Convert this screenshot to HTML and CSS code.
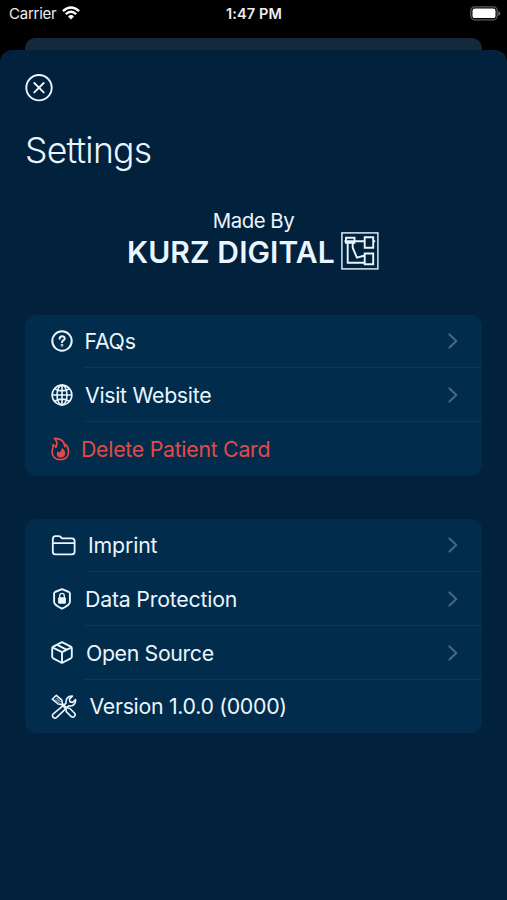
FILE: index.html
```html
<!DOCTYPE html>
<html lang="en">
<head>
<meta charset="utf-8">
<title>Settings</title>
<link rel="stylesheet" href="styles.css">
</head>
<body>
<header class="status">
  <div class="carrier"><span class="t-carrier">Carrier</span>
    <svg width="18" height="14" viewBox="0 0 18 14" fill="none" stroke="#fff" stroke-width="2.4"><path d="M.9 5.2Q9-2.4 17.1 5.2M3.8 8.2Q9 3.4 14.2 8.2"/><path d="M6 10.4Q9 7.8 12 10.4L9 13.4Z" fill="#fff" stroke="none"/></svg>
  </div>
  <div class="clock">1:47 PM</div>
  <svg class="battery" width="31" height="15" viewBox="0 0 31 15"><rect x=".8" y=".8" width="26.4" height="13" rx="4" fill="none" stroke="#5c5c5c" stroke-width="1.3"/><rect x="2.5" y="2.5" width="23" height="9.6" rx="2.2" fill="#fff"/><path d="M28.4 5v5q2-1 2-2.5T28.4 5Z" fill="#666"/></svg>
</header>
<div class="behind"></div>
<main class="sheet">
  <svg class="close" width="28" height="28" viewBox="0 0 28 28" fill="none" stroke="#eaf5ff" stroke-width="1.9" stroke-linecap="round"><circle cx="14" cy="13.7" r="12.7"/><path d="m9.3 9 9.4 9.4m0-9.4-9.4 9.4"/></svg>
  <h1>Settings</h1>
  <section class="maker">
    <p>Made By</p>
    <div class="brand"><span class="name">KURZ DIGITAL</span>
      <svg width="38" height="38" viewBox="0 0 38 38" fill="none" stroke="#eaf5ff"><rect x=".9" y=".9" width="36" height="36" stroke-width="1.4"/><g stroke-width="1.9"><path d="M5 5.8h8.5v5H5zM3.5 9.2h20.2M23.7 5.2h8.5v10.5h-8.5zM23.7 21.5h8.5v10.8h-8.5zM6.7 10.5v20.2h17M11.7 10.5v5.2l4.2 10 7.8-2.2M32.2 9.2h2"/></g></svg>
    </div>
  </section>
  <section class="card">
    <div class="row"><svg class="icon" width="22" height="22" viewBox="0 0 22 22" fill="none" stroke="currentColor" stroke-width="2"><circle cx="11" cy="11" r="9.7"/><path stroke-linecap="round" d="M8.6 8.8c0-3.5 5.3-3.3 5.1-.2-.1 1.8-2.7 1.8-2.7 3.7"/><circle cx="11" cy="15.3" r=".4"/></svg><span class="label faq">FAQs</span><svg class="chevron" viewBox="0 0 10 16"><path d="m1.5 1.5 6.8 6.5-6.8 6.5"/></svg></div>
    <div class="row"><svg class="icon" width="22" height="22" viewBox="0 0 22 22" fill="none" stroke="currentColor" stroke-width="1.6"><circle cx="11" cy="11" r="9.9"/><ellipse cx="11" cy="11" rx="5" ry="9.9"/><path d="M11 1v20M1 11h20M3.7 4.8Q11 9 18.3 4.8M3.7 17.2q7.3-4.2 14.6 0"/></svg><span class="label web">Visit Website</span><svg class="chevron" viewBox="0 0 10 16"><path d="m1.5 1.5 6.8 6.5-6.8 6.5"/></svg></div>
    <div class="row danger"><svg class="icon" width="19" height="24" viewBox="0 0 19 24" fill="none" stroke="currentColor" stroke-width="1.7" stroke-linejoin="round"><path d="M3.3 1.4c7.5 0 10.2 3.7 10.5 8.2l1.3-1.8c1.9 2.2 2.5 4.4 2.5 7 0 4.9-3.4 7.9-8.2 7.9-4.9 0-8.3-3.2-8.3-7.6 0-2.7 1.3-4.5 1-7.3 1.3.4 2.2 1.3 2.8 2.5C6.6 7 6.1 3.9 3.3 1.4Z"/><path d="M10.9 10.8c3.4 2.4 3.9 5.5 2.7 7.8-1.5 2.7-6.4 2.6-7.5-.2-.6-1.6-.2-3 .7-4.2.5.4.9.8 1.2 1.4 1.7-1 2.7-2.5 2.9-4.8Z" fill="currentColor" stroke="none"/></svg><span class="label del">Delete Patient Card</span></div>
  </section>
  <section class="card">
    <div class="row wide"><svg class="icon" width="25" height="21" viewBox="0 0 25 21" fill="none" stroke="currentColor" stroke-width="1.8" stroke-linejoin="round"><path d="M1.8 16.8V4q0-2.8 2.8-2.8h3.1q1.2 0 2 .8l1.4 1.3h9.8q2.7 0 2.7 2.7v10.7q0 2.7-2.7 2.7H4.5q-2.7 0-2.7-2.6ZM1.8 8.1h21.8"/></svg><span class="label imp">Imprint</span><svg class="chevron" viewBox="0 0 10 16"><path d="m1.5 1.5 6.8 6.5-6.8 6.5"/></svg></div>
    <div class="row"><svg class="icon shield" width="18" height="22" viewBox="0 0 18 22" fill="none" stroke="currentColor" stroke-width="1.9" stroke-linejoin="round"><path d="M9 1.2 16 4q.9.4.9 1.4v8.4c0 2.8-2.6 4.5-7.9 6.9-5.3-2.4-7.9-4.1-7.9-6.9V5.4Q1.1 4.4 2 4Z"/><path d="M6.7 10V7.8c0-3.3 4.6-3.3 4.6 0V10" stroke-width="1.3"/><rect x="5.1" y="9.3" width="7.8" height="6.4" rx="1" fill="currentColor" stroke="none"/></svg><span class="label data">Data Protection</span><svg class="chevron" viewBox="0 0 10 16"><path d="m1.5 1.5 6.8 6.5-6.8 6.5"/></svg></div>
    <div class="row"><svg class="icon cube" width="22" height="23" viewBox="0 0 22 23" fill="none" stroke="currentColor" stroke-width="1.9" stroke-linejoin="round"><path d="m11 1.2 8.8 4.5q1 .5 1 1.5v8.5q0 1-1 1.6L11 22l-8.8-4.7q-1-.6-1-1.6V7.2q0-1 1-1.5ZM1.5 6.3 11 11.2l9.5-4.9M11 11.2V22M6.2 3.9l9.7 4.9"/></svg><span class="label open">Open Source</span><svg class="chevron" viewBox="0 0 10 16"><path d="m1.5 1.5 6.8 6.5-6.8 6.5"/></svg></div>
    <div class="row"><svg class="icon" width="26" height="25" viewBox="0 0 26 25" fill="none" stroke="currentColor" stroke-width="1.6" stroke-linejoin="round"><path d="M2 20.2 15.1 9.1c-.7-4.1 2-7.5 6.3-7l-3 3 .6 2.8 2.7.5 2.8-2.8c.7 4.2-2.7 7-6.8 6.3L5.7 23.3c-2.3 2.1-5.6-1-3.7-3.1Z"/><path d="m1.3 5.2 4-3.9 5.4 4.6.7 3.8 2.3 2.1 2.4 2.2 2.5.2 5 5.1c1.8 2.1-1.2 5-3.3 3.3l-5-5-.3-2.6-4.6-4.5-3.4-.6Z" fill="#012c4b"/><path d="m4 5.5 4 3.8M5.5 4l4 3.8" stroke="#7995a9"/></svg><span class="label ver">Version 1.0.0 (0000)</span></div>
  </section>
</main>
</body>
</html>
```
FILE: styles.css
```css
* { box-sizing: border-box; }
body { margin: 0; width: 507px; height: 900px; overflow: hidden; background: #000; color: #eaf5ff; font-family: Inter, "Liberation Sans", sans-serif; }
.status { height: 38px; padding: 0 6px 0 9px; display: grid; grid-template-columns: 1fr auto 1fr; align-items: start; color: #eee; }
.carrier { display: flex; gap: 6px; padding-top: 5px; font-size: 15px; line-height: 18px; }
.carrier svg { margin-top: 1px; }
.t-carrier { width: 47px; white-space: nowrap; letter-spacing: -.25px; }
.clock { padding: 5px 2px 0 0; font-size: 14.5px; line-height: 18px; font-weight: 600; letter-spacing: .15px; }
.battery { justify-self: end; margin-top: 6px; }
.behind { height: 12px; margin: 0 25px; border-radius: 10px 10px 0 0; background: #15293d; }
.sheet { height: 850px; padding: 24px 25px 0; border-radius: 12px 12px 0 0; background: #01213c; }
.close { display: block; }
h1 { margin: 26px 0 0; font-size: 35.5px; line-height: 46px; font-weight: 300; letter-spacing: -.75px; }
.maker { margin-top: 34px; }
.maker p { margin: 0; text-align: center; font-size: 20.4px; line-height: 25px; letter-spacing: -.5px; }
.brand { display: flex; align-items: center; height: 38px; margin: -1px 0 0 102px; }
.name { width: 214px; padding-top: 2px; font-size: 30px; font-weight: 600; letter-spacing: .1px; white-space: nowrap; }
.card { width: 457px; margin-top: 43px; border-radius: 11px; background: #012c4b; }
.maker + .card { margin-top: 44.5px; }
.row { display: flex; align-items: center; height: 53.7px; padding: 0 24px 0 26px; position: relative; }
.row:not(:last-child)::after { content: ""; position: absolute; left: 59px; right: 0; bottom: 0; height: 1px; background: #0b3855; }
.wide::after { left: 63px !important; }
.icon { flex: none; }
.shield { margin: 0 2px; }
.cube { margin-right: 1px; }
.label { margin-left: 12px; font-size: 21.3px; line-height: 30px; white-space: nowrap; }
.faq { margin-left: 11.5px; letter-spacing: -.25px; }
.web { letter-spacing: -.3px; }
.del { margin-left: 11px; letter-spacing: -.27px; }
.imp { letter-spacing: -.15px; }
.data { letter-spacing: -.2px; }
.open { letter-spacing: -.35px; }
.ver { margin-left: 12.5px; letter-spacing: -.3px; }
.chevron { width: 10px; height: 16px; margin-left: auto; fill: none; stroke: #426780; stroke-width: 2.2; stroke-linecap: round; stroke-linejoin: round; }
.danger { color: #e14a48; }
```
